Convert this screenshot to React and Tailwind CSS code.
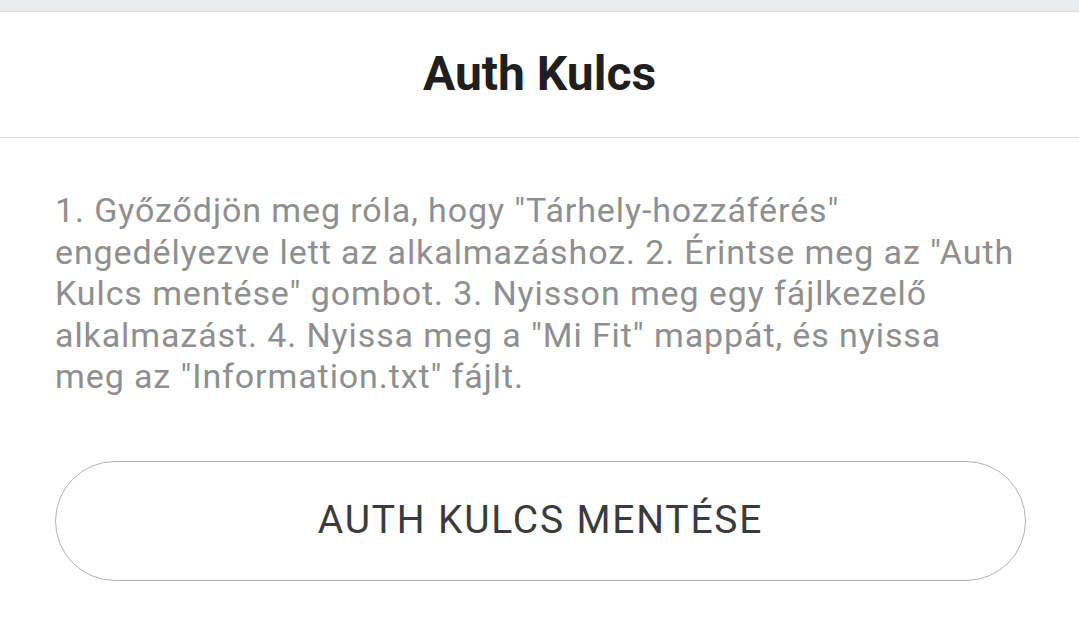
const steps = [
  '1. Győződjön meg róla, hogy "Tárhely-hozzáférés"',
  'engedélyezve lett az alkalmazáshoz. 2. Érintse meg az "Auth',
  'Kulcs mentése" gombot. 3. Nyisson meg egy fájlkezelő',
  'alkalmazást. 4. Nyissa meg a "Mi Fit" mappát, és nyissa',
  'meg az "Information.txt" fájlt.',
];

export default function App() {
  return (
    <div
      className="min-h-screen bg-white flex flex-col"
      style={{ fontFamily: "Roboto, 'Noto Sans', sans-serif" }}
    >
      {/* status strip */}
      <div className="h-[12px] bg-[#ebecee] border-b border-[#d9dadc]" />

      {/* Header */}
      <header className="h-[126px] flex items-center justify-center border-b border-[#dcdcdc]">
        <h1 className="text-[48px] font-bold text-[#1f1f1f] leading-none -mt-[1px]">Auth Kulcs</h1>
      </header>

      {/* Content */}
      <main className="pl-[55px] pr-[50px] pt-[52px]">
        <div className="text-[34px] leading-[41.5px] tracking-[0.9px] text-[#8f8f8f]">
          {steps.map((line, i) => (
            <p key={i} className="whitespace-nowrap">{line}</p>
          ))}
        </div>

        <button className="mt-[63px] w-[971px] h-[120px] rounded-full border border-[#b4b4b4] bg-white flex items-center justify-center">
          <span className="text-[39px] tracking-[1.8px] text-[#3b3b3b] leading-none">AUTH KULCS MENTÉSE</span>
        </button>
      </main>
    </div>
  );
}
